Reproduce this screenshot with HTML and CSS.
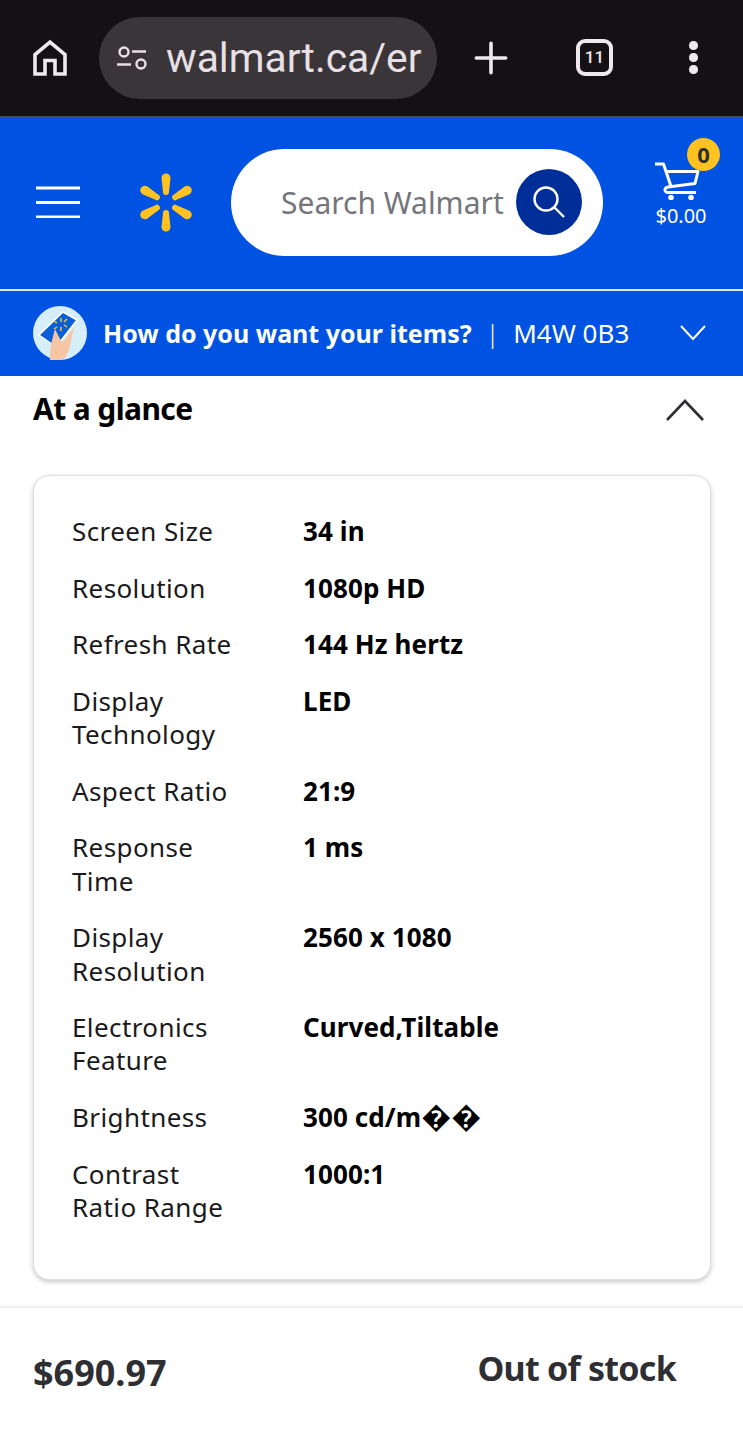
FILE: index.html
```html
<!DOCTYPE html>
<html lang="en">
<head>
<meta charset="utf-8">
<title>Walmart</title>
<link rel="stylesheet" href="styles.css">
</head>
<body>
<div class="chrome">
  <svg class="ic-home" width="36" height="38" viewBox="0 0 36 38"><path d="M3 35V15.500L18 3l15 12.500V35H23V21.500H13V35Z" fill="none" stroke="#efe8ec" stroke-width="3.600"/></svg>
  <div class="omnibox">
    <svg class="ic-tune" width="32" height="26" viewBox="0 0 32 26"><circle cx="8" cy="7" r="4.500" fill="none" stroke="#e8e0e5" stroke-width="2.400"/><path d="M16 6.500H30M1 19.500H15" stroke="#e8e0e5" stroke-width="2.400" fill="none"/><circle cx="25" cy="19" r="4.500" fill="none" stroke="#e8e0e5" stroke-width="2.400"/></svg>
    <div class="url">walmart.ca/er</div>
  </div>
  <svg class="ic-plus" width="36" height="36" viewBox="0 0 36 36"><path d="M18 3.300V32.700M3.300 18H32.700" stroke="#efe8ec" stroke-width="3.600" stroke-linecap="round"/></svg>
  <div class="tabs">11</div>
  <div class="dots"><i></i><i></i><i></i></div>
</div>
<header class="head">
  <svg class="ic-menu" width="44" height="32" viewBox="0 0 44 32"><path d="M0 2H44M0 16.500H44M0 31H44" stroke="#fff" stroke-width="3"/></svg>
  <svg class="spark" width="54" height="59" viewBox="-27 -29.500 54 59"><g fill="#ffc220"><path class="spoke" d="M-4.500-24.500a4.500 4.500 0 0 1 9 0L3-10.500a3 3 0 0 1-6 0Z"/><path d="M-4.500-24.500a4.500 4.500 0 0 1 9 0L3-10.500a3 3 0 0 1-6 0Z" transform="rotate(60)"/><path d="M-4.500-24.500a4.500 4.500 0 0 1 9 0L3-10.500a3 3 0 0 1-6 0Z" transform="rotate(120)"/><path d="M-4.500-24.500a4.500 4.500 0 0 1 9 0L3-10.500a3 3 0 0 1-6 0Z" transform="rotate(180)"/><path d="M-4.500-24.500a4.500 4.500 0 0 1 9 0L3-10.500a3 3 0 0 1-6 0Z" transform="rotate(240)"/><path d="M-4.500-24.500a4.500 4.500 0 0 1 9 0L3-10.500a3 3 0 0 1-6 0Z" transform="rotate(300)"/></g></svg>
  <div class="search">
    <span class="placeholder">Search Walmart</span>
    <div class="search-btn"><svg width="34" height="34" viewBox="0 0 34 34"><circle cx="14" cy="14" r="11.500" fill="none" stroke="#fff" stroke-width="2.400"/><path d="M22.500 22.500L32 32" stroke="#fff" stroke-width="2.400"/></svg></div>
  </div>
  <div class="cart">
    <svg width="46" height="38" viewBox="0 0 46 38"><path d="M1 2H9.500L17 24.500M11 9.500H44L41 21.500L14 25Q10.500 26 11 28.500Q11.500 30.500 14 30.500H42" fill="none" stroke="#fff" stroke-width="3" stroke-linejoin="round"/><circle cx="17" cy="35.500" r="2.800" fill="#fff"/><circle cx="37" cy="35.500" r="2.800" fill="#fff"/></svg>
    <div class="cart-total">$0.00</div>
    <div class="badge">0</div>
  </div>
</header>
<div class="intent">
  <svg class="intent-img" width="54" height="54" viewBox="0 0 54 54"><circle cx="27" cy="27" r="27" fill="#d6eef8"/><path d="M17 54L18 40L30 36L41 21L36 44L32 52Q24 55 17 54Z" fill="#f6c6a4"/><path d="M30 6L44 14L23 41L6 29Z" fill="#0a5fd8" stroke="#fff" stroke-width="1.500" stroke-linejoin="round"/><path d="M17 54L18 38L22 23L27 33L30 36L32 52Q24 55 17 54Z" fill="#f6c6a4"/><g stroke="#ffc220" stroke-width="1.500"><path d="M28 12V16M28 21V25M21 15L24 17M31 19L34 21M34 13L31 16M24 21L21 23"/></g></svg>
  <span class="intent-q">How do you want your items?</span>
  <span class="intent-sep">|</span>
  <span class="intent-zip">M4W 0B3</span>
  <svg class="ic-chev" width="26" height="16" viewBox="0 0 26 16"><path d="M1 1L13 14L25 1" fill="none" stroke="#fff" stroke-width="2"/></svg>
</div>
<section class="glance">
  <div class="glance-head">
    <h2>At a glance</h2>
    <svg width="38" height="22" viewBox="0 0 38 22"><path d="M1 21L19 2L37 21" fill="none" stroke="#2e2f32" stroke-width="2.600"/></svg>
  </div>
  <div class="card">
    <dl class="specs">
      <dt>Screen Size</dt><dd>34 in</dd>
      <dt>Resolution</dt><dd>1080p HD</dd>
      <dt>Refresh Rate</dt><dd>144 Hz hertz</dd>
      <dt>Display<br>Technology</dt><dd>LED</dd>
      <dt>Aspect Ratio</dt><dd>21:9</dd>
      <dt>Response<br>Time</dt><dd>1 ms</dd>
      <dt>Display<br>Resolution</dt><dd>2560 x 1080</dd>
      <dt>Electronics<br>Feature</dt><dd>Curved,Tiltable</dd>
      <dt>Brightness</dt><dd>300 cd/m<span class="bad">��</span></dd>
      <dt>Contrast<br>Ratio Range</dt><dd>1000:1</dd>
    </dl>
  </div>
</section>
<footer class="buy">
  <div class="price">$690.97</div>
  <div class="stock">Out of stock</div>
</footer>
</body>
</html>
```
FILE: styles.css
```css
* { box-sizing: border-box; }
html, body { margin: 0; padding: 0; }
body { width: 743px; height: 1440px; overflow: hidden; background: #fff; font-family: "Noto Sans", "Open Sans", sans-serif; color: #000; }

.chrome { height: 117px; background: #141114; border-bottom: 1px solid #4a4a55; display: flex; align-items: center; padding: 0 0 1px 32px; }
.ic-home { flex: none; }
.omnibox { width: 338px; height: 82px; margin-left: 31px; border-radius: 41px; background: #3a3539; display: flex; align-items: center; padding-left: 17px; overflow: hidden; flex: none; }
.ic-tune { flex: none; }
.url { font-family: Roboto, sans-serif; font-size: 40.800px; line-height: 48px; color: #e8e0e5; margin-left: 18px; white-space: nowrap; width: 256px; overflow: hidden; }
.ic-plus { margin-left: 36px; flex: none; }
.tabs { width: 37px; height: 37px; margin-left: 67px; border: 4px solid #efe8ec; border-radius: 9px; color: #efe8ec; font: 500 17px/29px Roboto, sans-serif; text-align: center; flex: none; }
.dots { margin-left: 76px; display: flex; flex-direction: column; gap: 3.700px; }
.dots i { display: block; width: 8.500px; height: 8.500px; border-radius: 50%; background: #efe8ec; }

.head { height: 172px; background: #0053e2; display: flex; align-items: center; padding: 0 0 2px 36px; position: relative; }
.ic-menu { flex: none; }
.spark { margin-left: 59px; flex: none; margin-top: 1px; }
.search { width: 372px; height: 107px; margin-left: 38px; background: #fff; border-radius: 54px; display: flex; align-items: center; padding-left: 50px; flex: none; }
.placeholder { font-size: 30px; color: #74767c; white-space: nowrap; width: 235px; flex: none; }
.search-btn { width: 66px; height: 66px; border-radius: 50%; background: #002e99; display: flex; align-items: center; justify-content: center; flex: none; }
.cart { position: relative; margin: 0 0 14px 51px; width: 54px; display: flex; flex-direction: column; align-items: center; }
.cart svg { display: block; margin-left: -8px; }
.cart-total { font-size: 20px; line-height: 24px; color: #fff; white-space: nowrap; margin-top: 4px; }
.badge { position: absolute; top: -24px; left: 33px; width: 33px; height: 33px; border-radius: 50%; background: #ffc220; color: #2e2f32; font-size: 22px; font-weight: 700; line-height: 32px; text-align: center; }

.intent { height: 87px; border-top: 2px solid #dce9fb; background: #0053e2; display: flex; align-items: center; padding: 0 0 2px 33px; color: #fff; }
.intent-img { flex: none; }
.intent-q { font-size: 25px; font-weight: 700; margin-left: 16px; white-space: nowrap; }
.intent-sep { font-size: 25px; margin-left: 14px; font-weight: 300; }
.intent-zip { font-size: 26px; margin-left: 14px; white-space: nowrap; }
.ic-chev { margin-left: 51px; flex: none; }

.glance { height: 932px; padding: 0 33px; border-bottom: 2px solid #f0f0f1; }
.glance-head { height: 99px; display: flex; justify-content: space-between; align-items: flex-start; padding: 12px 6px 0 0; }
.glance-head h2 { margin: 0; font-size: 30px; line-height: 42px; font-weight: 700; letter-spacing: -0.6px; }
.glance-head svg { margin-top: 11px; }
.card { width: 678px; height: 805px; background: #fff; border: 1px solid #dedfe0; border-radius: 16px; box-shadow: 0 2px 5px rgba(0, 0, 0, .22); padding: 39px 38px; }
.specs { margin: 0; display: grid; grid-template-columns: 231px 1fr; row-gap: 23.150px; font-size: 26px; line-height: 33.400px; }
.specs dt { color: #1a1a1c; letter-spacing: .4px; }
.specs dd { margin: 0; font-weight: 700; letter-spacing: .1px; }
.bad { font-size: 30px; line-height: 20px; }

.buy { height: 132px; display: flex; justify-content: space-between; padding: 0 67px 0 33px; color: #2e2f32; font-weight: 700; }
.price { font-size: 36px; line-height: 46px; margin-top: 42px; }
.stock { font-size: 34px; line-height: 46px; margin-top: 37px; letter-spacing: -0.75px; }
```
